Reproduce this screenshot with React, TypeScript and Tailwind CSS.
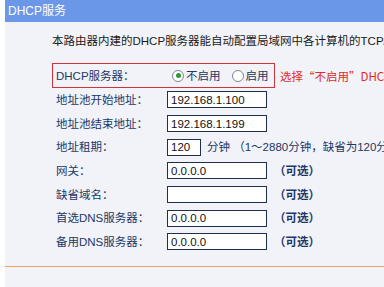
const FONT = { fontFamily: '"Liberation Sans", "Noto Sans CJK SC", sans-serif' };

type Row = { label: string; value?: string; width?: string; after?: string; optional?: boolean };

const ROWS: Row[] = [
  { label: '地址池开始地址：', value: '192.168.1.100' },
  { label: '地址池结束地址：', value: '192.168.1.199' },
  { label: '地址租期：', value: '120', width: 'w-[34px]', after: '分钟 （1～2880分钟，缺省为120分钟）' },
  { label: '网关：', value: '0.0.0.0', optional: true },
  { label: '缺省域名：', value: '', optional: true },
  { label: '首选DNS服务器：', value: '0.0.0.0', optional: true },
  { label: '备用DNS服务器：', value: '0.0.0.0', optional: true },
];

function Radio({ checked }: { checked?: boolean }) {
  return (
    <span className="flex h-[12px] w-[12px] shrink-0 items-center justify-center rounded-full border border-[#7d8797] bg-white">
      {checked && <span className="h-[5px] w-[5px] rounded-full bg-[#2f9a34]" />}
    </span>
  );
}

export default function App() {
  return (
    <div className="h-[287px] w-[384px] overflow-hidden bg-white text-[11.5px] leading-[14px]" style={FONT}>
      <div className="ml-[5px] flex h-[22px] items-center bg-[#6b97e9] px-[3px] text-[12px] text-white">DHCP服务</div>

      <div className="ml-[5px] h-[265px] bg-[#f1f3f8]">
        <div className="pl-[47px] pt-[12px]">
          <div className="whitespace-nowrap text-[#1a1a1a]">本路由器内建的DHCP服务器能自动配置局域网中各计算机的TCP/IP协议。</div>

          <div className="mt-[15px] flex h-[25px] items-center whitespace-nowrap">
            <div className="flex h-full w-[223px] shrink-0 items-center border border-[#d0343a] pl-[3px] text-[#1d3767]">
              <span className="w-[116px]">DHCP服务器：</span>
              <Radio checked />
              <span className="ml-[2px]">不启用</span>
              <span className="ml-[11px]"><Radio /></span>
              <span className="ml-[2px]">启用</span>
            </div>
            <span
              className="ml-[5px] text-[#e02a2a]"
              style={{ fontFamily: '"Noto Sans CJK SC", "Liberation Sans", sans-serif' }}
            >
              选择“不启用”DHCP服务器
            </span>
          </div>

          <div className="flex flex-col">
            {ROWS.map((r) => (
              <div key={r.label} className="flex h-[23.7px] items-center whitespace-nowrap pl-[4px] text-[#1d3767]">
                <span className="w-[111px] shrink-0">{r.label}</span>
                <div
                  className={`flex h-[17px] shrink-0 items-center border border-[#1f2f4f] bg-white px-[3px] text-[#111] ${r.width ?? 'w-[100px]'}`}
                >
                  {r.value}
                </div>
                {r.after && <span className="ml-[6px]">{r.after}</span>}
                {r.optional && <span className="ml-[7px] font-bold">（可选）</span>}
              </div>
            ))}
          </div>
        </div>

        <div className="mt-[12px] h-px bg-[#eea55a]" />
      </div>

      <div className="flex items-start gap-[10px] pl-[9px]">
        <div className="border border-[#d0343a] p-[1px]">
          <div className="flex h-[20px] w-[44px] items-center justify-center border border-[#24365f] bg-[#d3dcf5] text-[12.5px] text-[#1d3767]">
            保 存
          </div>
        </div>
        <div className="mt-[2px] flex h-[20px] w-[42px] items-center justify-center border border-[#24365f] bg-[#d3dcf5] text-[12.5px] text-[#1d3767]">
          帮 助
        </div>
      </div>
    </div>
  );
}
